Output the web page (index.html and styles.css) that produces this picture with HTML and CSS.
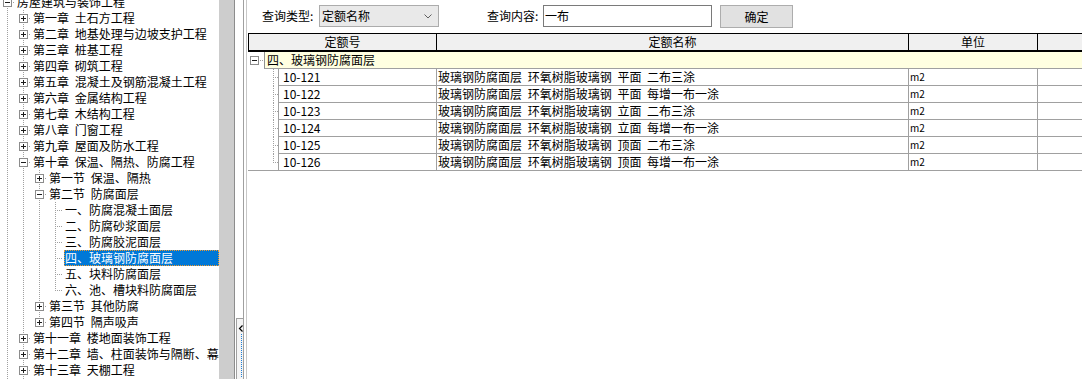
FILE: index.html
```html
<!DOCTYPE html>
<html lang="zh-CN">
<head>
    <meta charset="UTF-8">
    <title>定额查询</title>
    <link rel="stylesheet" href="styles.css">
</head>
<body>
    <div class="window">
        <div class="tree">
            <div class="tree-list">
                <div class="node"><span class="cell own first"><i class="box minus"></i></span><span class="label">房屋建筑与装饰工程</span></div>
                <div class="node"><span class="cell pipe"></span><span class="cell own tee"><i class="box plus"></i></span><span class="label">第一章 土石方工程</span></div>
                <div class="node"><span class="cell pipe"></span><span class="cell own tee"><i class="box plus"></i></span><span class="label">第二章 地基处理与边坡支护工程</span></div>
                <div class="node"><span class="cell pipe"></span><span class="cell own tee"><i class="box plus"></i></span><span class="label">第三章 桩基工程</span></div>
                <div class="node"><span class="cell pipe"></span><span class="cell own tee"><i class="box plus"></i></span><span class="label">第四章 砌筑工程</span></div>
                <div class="node"><span class="cell pipe"></span><span class="cell own tee"><i class="box plus"></i></span><span class="label">第五章 混凝土及钢筋混凝土工程</span></div>
                <div class="node"><span class="cell pipe"></span><span class="cell own tee"><i class="box plus"></i></span><span class="label">第六章 金属结构工程</span></div>
                <div class="node"><span class="cell pipe"></span><span class="cell own tee"><i class="box plus"></i></span><span class="label">第七章 木结构工程</span></div>
                <div class="node"><span class="cell pipe"></span><span class="cell own tee"><i class="box plus"></i></span><span class="label">第八章 门窗工程</span></div>
                <div class="node"><span class="cell pipe"></span><span class="cell own tee"><i class="box plus"></i></span><span class="label">第九章 屋面及防水工程</span></div>
                <div class="node"><span class="cell pipe"></span><span class="cell own tee"><i class="box minus"></i></span><span class="label">第十章 保温、隔热、防腐工程</span></div>
                <div class="node"><span class="cell pipe"></span><span class="cell pipe"></span><span class="cell own tee"><i class="box plus"></i></span><span class="label">第一节 保温、隔热</span></div>
                <div class="node"><span class="cell pipe"></span><span class="cell pipe"></span><span class="cell own tee"><i class="box minus"></i></span><span class="label">第二节 防腐面层</span></div>
                <div class="node"><span class="cell pipe"></span><span class="cell pipe"></span><span class="cell pipe"></span><span class="cell own tee"></span><span class="label">一、防腐混凝土面层</span></div>
                <div class="node"><span class="cell pipe"></span><span class="cell pipe"></span><span class="cell pipe"></span><span class="cell own tee"></span><span class="label">二、防腐砂浆面层</span></div>
                <div class="node"><span class="cell pipe"></span><span class="cell pipe"></span><span class="cell pipe"></span><span class="cell own tee"></span><span class="label">三、防腐胶泥面层</span></div>
                <div class="node"><span class="cell pipe"></span><span class="cell pipe"></span><span class="cell pipe"></span><span class="cell own tee"></span><span class="label selected">四、玻璃钢防腐面层</span></div>
                <div class="node"><span class="cell pipe"></span><span class="cell pipe"></span><span class="cell pipe"></span><span class="cell own tee"></span><span class="label">五、块料防腐面层</span></div>
                <div class="node"><span class="cell pipe"></span><span class="cell pipe"></span><span class="cell pipe"></span><span class="cell own elbow"></span><span class="label">六、池、槽块料防腐面层</span></div>
                <div class="node"><span class="cell pipe"></span><span class="cell pipe"></span><span class="cell own tee"><i class="box plus"></i></span><span class="label">第三节 其他防腐</span></div>
                <div class="node"><span class="cell pipe"></span><span class="cell pipe"></span><span class="cell own elbow"><i class="box plus"></i></span><span class="label">第四节 隔声吸声</span></div>
                <div class="node"><span class="cell pipe"></span><span class="cell own tee"><i class="box plus"></i></span><span class="label">第十一章 楼地面装饰工程</span></div>
                <div class="node"><span class="cell pipe"></span><span class="cell own tee"><i class="box plus"></i></span><span class="label">第十二章 墙、柱面装饰与隔断、幕墙工程</span></div>
                <div class="node"><span class="cell pipe"></span><span class="cell own tee"><i class="box plus"></i></span><span class="label">第十三章 天棚工程</span></div>
                <div class="node"><span class="cell pipe"></span><span class="cell pipe"></span></div>
            </div>
        </div>
        <div class="vscroll"></div>
        <div class="splitter">
            <div class="split-btn">
                <svg class="split-arrow" width="6" height="7" viewBox="0 0 6 7"><polyline points="4.5,0.5 1.5,3.5 4.5,6.5" fill="none" stroke="#000" stroke-width="1.2"/></svg>
                <div class="split-dots"></div>
            </div>
        </div>
        <div class="main">
            <div class="toolbar">
                <span class="lbl lbl-type">查询类型:</span>
                <div class="combo">
                    <span>定额名称</span>
                    <svg class="chev" width="8" height="5" viewBox="0 0 8 5"><polyline points="0.5,0.5 4,4 7.5,0.5" fill="none" stroke="#606060" stroke-width="1"/></svg>
                </div>
                <span class="lbl lbl-key">查询内容:</span>
                <div class="edit">一布</div>
                <div class="btn">确定</div>
            </div>

            <div class="grid">
                <div class="head">
                    <div class="hc c1">定额号</div>
                    <div class="hc c2">定额名称</div>
                    <div class="hc c3">单位</div>
                    <div class="hc c4"></div>
                </div>
                <div class="group">
                    <span class="gbox"><i class="box minus"></i></span>
                    <div class="gtitle">四、玻璃钢防腐面层</div>
                </div>
                <div class="row"><span class="link tee"></span><div class="dc c1">10-121</div><div class="dc c2">玻璃钢防腐面层 环氧树脂玻璃钢 平面 二布三涂</div><div class="dc c3">m2</div><div class="dc c4"></div></div>
                <div class="row"><span class="link tee"></span><div class="dc c1">10-122</div><div class="dc c2">玻璃钢防腐面层 环氧树脂玻璃钢 平面 每增一布一涂</div><div class="dc c3">m2</div><div class="dc c4"></div></div>
                <div class="row"><span class="link tee"></span><div class="dc c1">10-123</div><div class="dc c2">玻璃钢防腐面层 环氧树脂玻璃钢 立面 二布三涂</div><div class="dc c3">m2</div><div class="dc c4"></div></div>
                <div class="row"><span class="link tee"></span><div class="dc c1">10-124</div><div class="dc c2">玻璃钢防腐面层 环氧树脂玻璃钢 立面 每增一布一涂</div><div class="dc c3">m2</div><div class="dc c4"></div></div>
                <div class="row"><span class="link tee"></span><div class="dc c1">10-125</div><div class="dc c2">玻璃钢防腐面层 环氧树脂玻璃钢 顶面 二布三涂</div><div class="dc c3">m2</div><div class="dc c4"></div></div>
                <div class="row last"><span class="link elbow"></span><div class="dc c1">10-126</div><div class="dc c2">玻璃钢防腐面层 环氧树脂玻璃钢 顶面 每增一布一涂</div><div class="dc c3">m2</div><div class="dc c4"></div></div>
            </div>
        </div>
    </div>
</body>
</html>
```

FILE: styles.css
```css
body {
    margin: 0;
    padding: 0;
    background: #fff;
    font-family: "Noto Sans CJK SC", "Noto Sans", sans-serif;
    font-size: 12px;
    color: #000;
    word-spacing: 3px;
    overflow: hidden;
}
.window {
    display: flex;
    width: 1082px;
    height: 379px;
    overflow: hidden;
}

/* left tree */
.tree {
    width: 219px;
    flex: none;
    overflow: hidden;
    background: #fff;
}
.tree-list {
    margin: -6px 0 0 -1px;
}
.node {
    display: flex;
    height: 16px;
    line-height: 16px;
    white-space: nowrap;
}
.cell {
    width: 16px;
    height: 16px;
    flex: none;
    display: flex;
    align-items: center;
    justify-content: center;
    background-repeat: no-repeat;
}
.pipe {
    background-image: repeating-linear-gradient(to bottom, #a0a0a0 0 1px, transparent 1px 2px);
    background-size: 1px 100%;
    background-position: 8px 0;
}
.tee {
    background-image: repeating-linear-gradient(to bottom, #a0a0a0 0 1px, transparent 1px 2px),
                      repeating-linear-gradient(to right, #a0a0a0 0 1px, transparent 1px 2px);
    background-size: 1px 100%, 8px 1px;
    background-position: 8px 0, 8px 8px;
}
.elbow {
    background-image: repeating-linear-gradient(to bottom, #a0a0a0 0 1px, transparent 1px 2px),
                      repeating-linear-gradient(to right, #a0a0a0 0 1px, transparent 1px 2px);
    background-size: 1px 9px, 8px 1px;
    background-position: 8px 0, 8px 8px;
}
.first {
    background-image: repeating-linear-gradient(to bottom, #a0a0a0 0 1px, transparent 1px 2px),
                      repeating-linear-gradient(to right, #a0a0a0 0 1px, transparent 1px 2px);
    background-size: 1px 8px, 8px 1px;
    background-position: 8px 8px, 8px 8px;
}
.box {
    display: block;
    width: 9px;
    height: 9px;
    box-sizing: border-box;
    border: 1px solid #8c8c8c;
    background-color: #fff;
    background-repeat: no-repeat;
    margin-left: 1px;
}
.minus {
    background-image: linear-gradient(#1c1c1c, #1c1c1c);
    background-size: 5px 1px;
    background-position: center;
}
.plus {
    background-image: linear-gradient(#1c1c1c, #1c1c1c), linear-gradient(#1c1c1c, #1c1c1c);
    background-size: 5px 1px, 1px 5px;
    background-position: center, center;
}
.label {
    padding: 0 2px;
}
.label.selected {
    flex: 1;
    margin-left: 1px;
    padding-left: 1px;
    background: #0078d7;
    color: #fff;
    outline: 1px dotted #f39a2c;
    outline-offset: -1px;
}

/* gray strip + splitter */
.vscroll {
    width: 15px;
    flex: none;
    background: #cdcdcd;
    border-right: 1px solid #8c8c8c;
}
.splitter {
    width: 9px;
    flex: none;
    border-right: 1px solid #a0a0a0;
    padding-top: 318px;
    box-sizing: border-box;
    background: #fff;
}
.split-btn {
    margin-left: 1px;
    height: 61px;
    border-top: 1px solid #a0a0a0;
    border-left: 1px solid #a0a0a0;
    background: #f4f4f4;
}
.split-arrow {
    display: block;
    margin: 6px 0 0 1px;
}
.split-dots {
    margin-top: 2px;
    height: 44px;
    background-image: repeating-linear-gradient(to bottom, #1e7fd8 0 1px, transparent 1px 2px);
    background-size: 1px 100%;
    background-position: 4px 0;
    background-repeat: no-repeat;
}

/* main panel */
.main {
    flex: 1;
    margin-left: 2px;
    border-left: 1px solid #c8c8c8;
    overflow: hidden;
}
.toolbar {
    display: flex;
    align-items: flex-start;
    height: 33px;
    box-sizing: border-box;
    padding: 5px 0 0 15px;
    white-space: nowrap;
}
.lbl {
    line-height: 22px;
    flex: none;
}
.lbl-type { width: 57px; }
.lbl-key { width: 56px; margin-left: 48px; }
.combo {
    width: 120px;
    height: 22px;
    box-sizing: border-box;
    border: 1px solid #acacac;
    background: #e9e9e9;
    display: flex;
    align-items: center;
    justify-content: space-between;
    padding: 0 6px 0 2px;
    line-height: 20px;
}
.chev { display: block; margin-top: 1px; }
.edit {
    width: 169px;
    height: 22px;
    box-sizing: border-box;
    border: 1px solid #7a7a7a;
    background: #fff;
    line-height: 20px;
    padding-left: 1px;
}
.btn {
    width: 73px;
    height: 23px;
    margin-left: 8px;
    box-sizing: border-box;
    border: 1px solid #adadad;
    background: #e1e1e1;
    text-align: center;
    line-height: 21px;
}

/* result grid */
.grid {
    margin-left: 1px;
    width: 900px;
}
.head {
    display: flex;
    height: 19px;
    box-sizing: border-box;
    border-top: 1px solid #000;
    border-bottom: 2px solid #000;
    background: #f0f0f0;
}
.hc {
    box-sizing: border-box;
    height: 16px;
    line-height: 16px;
    text-align: center;
    border-right: 1px solid #000;
}
.head .c1 { width: 189px; border-left: 1px solid #000; }
.c2 { width: 472px; }
.c3 { width: 129px; }
.c4 { flex: 1; border-right: none; }

.group {
    display: flex;
    height: 17px;
}
.gbox {
    width: 16px;
    flex: none;
    display: flex;
    align-items: center;
    background-image: repeating-linear-gradient(to right, #a0a0a0 0 1px, transparent 1px 2px);
    background-size: 4px 1px;
    background-position: 12px 8px;
    background-repeat: no-repeat;
}
.gbox .box { margin-left: 2px; }
.gtitle {
    flex: 1;
    background: #ffffe1;
    border-left: 1px solid #909090;
    border-bottom: 1px solid #a0a0a0;
    padding-left: 2px;
    line-height: 16px;
}

.row {
    display: flex;
    height: 17px;
    white-space: nowrap;
}
.link {
    width: 30px;
    flex: none;
    box-sizing: border-box;
    background-repeat: no-repeat;
    background-image: repeating-linear-gradient(to bottom, #a0a0a0 0 1px, transparent 1px 2px),
                      repeating-linear-gradient(to right, #a0a0a0 0 1px, transparent 1px 2px);
    background-size: 1px 100%, 5px 1px;
    background-position: 25px 0, 25px 8px;
}
.link.elbow {
    background-size: 1px 9px, 5px 1px;
}
.row.last .link {
    border-bottom: 1px solid #a0a0a0;
}
.dc {
    box-sizing: border-box;
    height: 17px;
    line-height: 16px;
    border-right: 1px solid #a0a0a0;
    border-bottom: 1px solid #a0a0a0;
    padding-left: 1px;
    overflow: hidden;
}
.row .c1 {
    width: 159px;
    border-left: 1px solid #a0a0a0;
    padding-left: 4px;
}
.row .c3 {
    font-size: 10px;
    word-spacing: 0;
}
```
